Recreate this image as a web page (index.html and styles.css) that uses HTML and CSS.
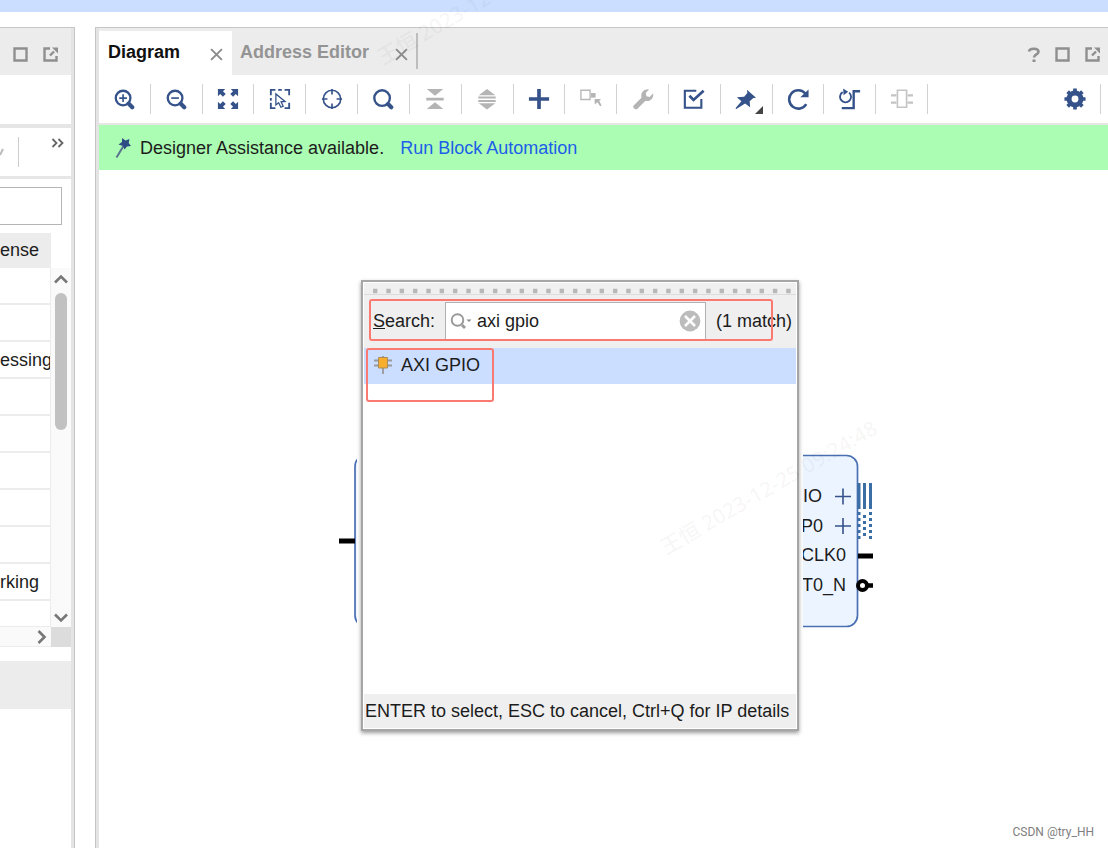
FILE: index.html
```html
<!DOCTYPE html>
<html lang="en">
<head>
<meta charset="utf-8">
<title>Block Design</title>
<link rel="stylesheet" href="styles.css">
</head>
<body>
<svg class="defs" aria-hidden="true">
  <symbol id="maximize" viewBox="0 0 16 16"><path d="M1.5 1.5h12v12h-12z" fill="none" stroke="#8f8f8f" stroke-width="2.4"/></symbol>
  <symbol id="popout" viewBox="0 0 16 16"><path d="M7 1.5H1.5v12h12V9" fill="none" stroke="#8f8f8f" stroke-width="2.4"/><path d="M7 8.500l4-4" stroke="#8f8f8f" stroke-width="2.400"/><path d="M9 .5H15v6z" fill="#8f8f8f"/></symbol>
  <symbol id="close" viewBox="0 0 12 12"><path d="M1 1l10 10M11 1L1 11" stroke="#8c8c8c" stroke-width="1.8"/></symbol>
</svg>
<div class="band"></div>
<div class="workspace">
  <aside class="side">
    <div class="side-head">
      <button class="plain" aria-label="Maximize"><svg class="i16"><use href="#maximize"/></svg></button>
      <button class="plain" aria-label="Float"><svg class="i16"><use href="#popout"/></svg></button>
    </div>
    <div class="side-tabs"></div>
    <div class="side-tools">
      <svg class="chev" viewBox="0 0 4 8" aria-hidden="true"><path d="M0 7L3 1" stroke="#bbb" stroke-width="2"/></svg>
      <span class="rule"></span>
      <button class="plain more" aria-label="More"><svg width="14" height="10" viewBox="0 0 14 10"><path d="M1.500 1l4 4-4 4M7.500 1l4 4-4 4" fill="none" stroke="#666" stroke-width="1.800"/></svg></button>
    </div>
    <div class="side-filter"><input type="text" aria-label="Filter"></div>
    <div class="grid">
      <table>
        <thead><tr><th>ense</th></tr></thead>
        <tbody>
          <tr><td></td></tr><tr><td></td></tr><tr><td>essing</td></tr><tr><td></td></tr><tr><td></td></tr>
          <tr><td></td></tr><tr><td></td></tr><tr><td></td></tr><tr><td>rking</td></tr><tr class="partial"><td></td></tr>
        </tbody>
      </table>
      <div class="vbar">
        <svg width="16" height="10" viewBox="0 0 16 10"><path d="M2 8.500l6-6 6 6" fill="none" stroke="#777" stroke-width="2.600"/></svg>
        <span class="thumb"></span>
        <svg width="16" height="10" viewBox="0 0 16 10"><path d="M2 1.500l6 6 6-6" fill="none" stroke="#777" stroke-width="2.600"/></svg>
      </div>
      <div class="hbar"><svg width="10" height="16" viewBox="0 0 10 16"><path d="M1.500 2l6 6-6 6" fill="none" stroke="#777" stroke-width="2.600"/></svg></div>
      <div class="corner"></div>
    </div>
    <div class="side-foot"></div>
  </aside>

  <main class="main">
    <header class="tabs">
      <div class="tab active"><span>Diagram</span><button class="plain" aria-label="Close Diagram"><svg class="i12"><use href="#close"/></svg></button></div>
      <div class="tab"><span>Address Editor</span><button class="plain" aria-label="Close Address Editor"><svg class="i12"><use href="#close"/></svg></button></div>
      <div class="window-tools">
        <button class="plain help" aria-label="Help"><svg width="14" height="16" viewBox="0 0 14 16"><path d="M2 4.500C2.500 .8 11.500 .8 11.500 4.800c0 2.600-4.500 2.600-4.500 5.700" fill="none" stroke="#8f8f8f" stroke-width="2.600"/><path d="M5.500 12.500h3V15h-3z" fill="#8f8f8f"/></svg></button>
        <button class="plain" aria-label="Maximize"><svg class="i16"><use href="#maximize"/></svg></button>
        <button class="plain" aria-label="Float"><svg class="i16"><use href="#popout"/></svg></button>
      </div>
    </header>

    <div class="toolbar">
      <div class="tools">
        <button aria-label="Zoom In"><svg viewBox="0 0 24 24"><circle cx="11" cy="11" r="8" fill="none" stroke="#35528a" stroke-width="2.500"/><path d="M11 6.800v8.400M6.800 11h8.400" stroke="#35528a" stroke-width="1.800"/><path d="M17 17l4 4" stroke="#35528a" stroke-width="4.500" stroke-linecap="round"/></svg></button>
        <button aria-label="Zoom Out"><svg viewBox="0 0 24 24"><circle cx="11" cy="11" r="8" fill="none" stroke="#35528a" stroke-width="2.500"/><path d="M6.800 11h8.400" stroke="#35528a" stroke-width="1.800"/><path d="M17 17l4 4" stroke="#35528a" stroke-width="4.500" stroke-linecap="round"/></svg></button>
        <button aria-label="Zoom Fit"><svg viewBox="0 0 24 24"><path d="M1 1h8L6.500 3.500 9.500 6.500 6.500 9.500 3.500 6.500 1 9zM23 1h-8l2.500 2.500-3 3 3 3L20.500 6.500 23 9zM1 23h8l-2.500-2.500 3-3-3-3-3 3L1 15zM23 23h-8l2.500-2.500-3-3 3-3 3 3L23 15z" fill="#35528a"/></svg></button>
        <button aria-label="Zoom to Selection"><svg viewBox="0 0 24 24"><path d="M2 8V2h5M17 2h5v6M2 16v6h5M17 22h5v-6M10 2h4M2 11v3" fill="none" stroke="#35528a" stroke-width="2"/><path d="M7.500 6.500v12l3-2.500 2.500 5 2.500-1.200-2.300-4.800 4.300-.3z" fill="none" stroke="#35528a" stroke-width="1.400"/></svg></button>
        <button aria-label="Center"><svg viewBox="0 0 24 24"><circle cx="12" cy="12" r="9.500" fill="none" stroke="#35528a" stroke-width="1.800"/><path d="M12 1v6M12 17v6M1 12h6M17 12h6" stroke="#35528a" stroke-width="1.800"/></svg></button>
        <button aria-label="Find"><svg viewBox="0 0 24 24"><circle cx="11" cy="11" r="8.500" fill="none" stroke="#35528a" stroke-width="2.600"/><path d="M17.500 17.500l3.500 3.500" stroke="#35528a" stroke-width="4.500" stroke-linecap="round"/></svg></button>
        <button aria-label="Collapse All"><svg viewBox="0 0 24 24"><path d="M3 1h18l-9 7.500zM3 23h18l-9-7.500zM2.500 10.700h19v2.800h-19z" fill="#b4b4b4"/></svg></button>
        <button aria-label="Expand All"><svg viewBox="0 0 24 24"><path d="M3 8h18L12 1zM3 16.500h18l-9 7zM2.500 9.300h19v2.200h-19zM2.500 13h19v2.200h-19z" fill="#b4b4b4"/></svg></button>
        <button aria-label="Add IP"><svg viewBox="0 0 24 24"><path d="M12 1v22M1 12h22" stroke="#35528a" stroke-width="4"/></svg></button>
        <button aria-label="Make External"><svg viewBox="0 0 24 24"><path d="M1 2.500h10v10H1z" fill="none" stroke="#b8b8b8" stroke-width="1.500"/><path d="M12 5.500h5v5h-5z" fill="#b4b4b4"/><path d="M16 12h7l-2 2 2.500 5-1.500 1-3-4.500-3 2.500z" fill="#b4b4b4"/></svg></button>
        <button aria-label="Customize"><svg viewBox="0 0 24 24"><path d="M1.800 19l8.500-8.300C9.300 5 13 1 18.500 1.500L15 5.500l.8 3.500 3.500.8 3.900-4c.5 6.200-4 9.200-8.500 8.200L6 22.500C3.500 24.500 .3 21.500 1.800 19z" fill="#b4b4b4"/></svg></button>
        <button aria-label="Validate"><svg viewBox="0 0 24 24"><path d="M14.500 3H2v18.500h18V12" fill="none" stroke="#35528a" stroke-width="2.300"/><path d="M7 8.500l4.500 4.500L22.500 3" fill="none" stroke="#35528a" stroke-width="3"/></svg></button>
        <button class="drop" aria-label="Pin"><svg viewBox="0 0 24 24"><path d="M13 2l10 8.500-3 .5-4 3.500.5 6.500-5.500-4L1.500 23 .5 22l6.500-7.500-5-4.500 8-.5L13.500 5.500z" fill="#35528a"/></svg><svg class="mark" viewBox="0 0 8 8"><path d="M8 0v8H0z" fill="#444"/></svg></button>
        <button aria-label="Regenerate"><svg viewBox="0 0 24 24"><path d="M21 17.500A10 10 0 1 1 20 6" fill="none" stroke="#35528a" stroke-width="2.800"/><path d="M23.500 1.500V10H14.500z" fill="#35528a"/></svg></button>
        <button aria-label="Optimize Routing"><svg viewBox="0 0 24 24"><path d="M11 5A6 6 0 1 1 4 4.500" fill="none" stroke="#35528a" stroke-width="2"/><path d="M4.500 .5l5.500 3.500-5 4z" fill="#35528a"/><path d="M3 22h13V3.500h7" fill="none" stroke="#35528a" stroke-width="2.600"/></svg></button>
        <button aria-label="Interface"><svg viewBox="0 0 24 24"><path d="M7 2.500h10v18.500H7z" fill="none" stroke="#c4c4c4" stroke-width="1.800"/><path d="M0 8h6M0 16h6M18 8h6M18 16h6" stroke="#c4c4c4" stroke-width="2.400"/></svg></button>
      </div>
      <div class="tools settings">
        <button aria-label="Settings"><svg viewBox="0 0 24 24"><circle cx="12" cy="12" r="6.500" fill="none" stroke="#35528a" stroke-width="5.500"/><path d="M12 .5V5M12 19v4.500M.5 12H5M19 12h4.500M4 4l3 3M17 17l3 3M4 20l3-3M17 7l3-3" stroke="#35528a" stroke-width="4"/></svg></button>
      </div>
    </div>

    <div class="assist">
      <svg width="18" height="22" viewBox="0 0 18 22" aria-hidden="true"><path d="M9.500 9L2.500 20.500" stroke="#5a7390" stroke-width="2"/><path d="M8 1l3.500 2.500L15.500 2l-.8 4 2.300 3-4 .5-2.500 3L9 9 4.500 7.500 8 5z" fill="#2f4d85"/></svg>
      <span>Designer Assistance available.</span>
      <a href="#">Run Block Automation</a>
    </div>

    <section class="canvas">
      <svg class="block" viewBox="99 170 800 500" width="800" height="500" role="img" aria-label="Processing system block">
        <rect x="355" y="455.500" width="502.500" height="171" rx="11" fill="#ecf5ff" stroke="#4a6fb3" stroke-width="1.700"/>
        <path d="M339 541h16M858 556h15" stroke="#000" stroke-width="5"/>
        <g class="pins"><text x="822" y="502">IO</text><text x="823" y="532">P0</text><text x="846" y="561">CLK0</text><text x="846" y="591">T0_N</text></g>
        <path d="M835 496.500h16M843 488.500v16M835 526h16M843 518v16" stroke="#35528a" stroke-width="1.600"/>
        <path d="M859 483v26M864.500 483v26M870.500 483v26" stroke="#3a6ea5" stroke-width="3"/>
        <path d="M859 512v27M870.500 512v27" stroke="#3a6ea5" stroke-width="3" stroke-dasharray="3 3"/>
        <path d="M864.500 515v22" stroke="#3a6ea5" stroke-width="3" stroke-dasharray="3 3"/>
        <circle cx="862.500" cy="585.500" r="4.500" fill="#fff" stroke="#000" stroke-width="4"/><path d="M868 585.500h5" stroke="#000" stroke-width="4.500"/>
      </svg>

      <div class="dialog" role="dialog" aria-label="Add IP">
        <svg class="grip" aria-hidden="true"><line x1="9" y1="8" x2="428" y2="8" stroke="#b8b8b8" stroke-width="4.400" stroke-dasharray="4.400 8.930"/></svg>
        <div class="search">
          <label for="q"><u>S</u>earch:</label>
          <div class="field">
            <svg width="22" height="18" viewBox="0 0 22 18" aria-hidden="true"><circle cx="7.500" cy="8" r="5.800" fill="none" stroke="#999" stroke-width="1.900"/><path d="M12 13l3 3" stroke="#999" stroke-width="2.800"/><path d="M16.500 7.500h5l-2.500 2.500z" fill="#888"/></svg>
            <input id="q" type="text" value="axi gpio">
            <button class="plain" aria-label="Clear"><svg width="22" height="22" viewBox="0 0 22 22"><circle cx="11" cy="11" r="10.400" fill="#bcbcbc"/><path d="M6 6l10 10M16 6L6 16" stroke="#fff" stroke-width="2.500"/></svg></button>
          </div>
          <span>(1 match)</span>
        </div>
        <div class="results">
          <button class="result"><svg width="20" height="20" viewBox="0 0 20 20"><path d="M1 5.500h18M1 10.500h18M10 1v18" stroke="#999" stroke-width="1.800"/><path d="M5.500 2.500h9v10.500h-9z" fill="#f9ad2d" stroke="#a98c5a" stroke-width="1"/></svg>AXI GPIO</button>
        </div>
        <div class="hint">ENTER to select, ESC to cancel, Ctrl+Q for IP details</div>
        <span class="callout callout-search"></span>
        <span class="callout callout-result"></span>
      </div>
      <span class="credit">CSDN @try_HH</span>
    </section>
  </main>
</div>
<span class="watermark mark-top">王恒 2023-12-</span>
<span class="watermark mark-mid">王恒 2023-12-25 09:24:48</span>
</body>
</html>
```
FILE: styles.css
```css
* { box-sizing: border-box; }
body {
  margin: 0;
  min-height: 100vh;
  display: flex;
  flex-direction: column;
  position: relative;
  overflow: hidden;
  background: #fff;
  color: #1c1c1c;
  font: 18px/24px "Liberation Sans", Arial, sans-serif;
}
svg { display: block; flex: none; }
button, input { font: inherit; color: inherit; }
.defs { position: absolute; width: 0; height: 0; }
.plain { display: flex; padding: 0; border: 0; background: none; }
.i16 { width: 16px; height: 16px; }
.i12 { width: 13px; height: 13px; }

.band { height: 12px; background: #ccdeff; }
.workspace { flex: 1; display: flex; gap: 20px; padding-top: 15px; }

/* Left panel */
.side {
  flex: 0 0 75px;
  display: flex;
  flex-direction: column;
  overflow: hidden;
  border-top: 1px solid #c6c6c6;
  border-right: 1px solid #c4c4c4;
  box-shadow: inset -3px 0 #e4e4e4;
  padding-right: 3px;
}
.side-head { height: 47px; padding: 6px 12px 0 0; display: flex; align-items: center; justify-content: flex-end; gap: 14px; background: #ececec; }
.side-tabs { height: 53px; border-bottom: 4px solid #e6e6e6; }
.side-tools { height: 51px; display: flex; align-items: center; border-bottom: 3px solid #e6e6e6; }
.chev { width: 4px; height: 8px; }
.rule { width: 1px; height: 30px; margin-left: 14px; background: #ccc; }
.more { margin: 0 0 18px 32px; }
.side-filter { padding: 8px 9px 8px 0; }
.side-filter input { display: block; width: 100%; height: 38px; border: 1px solid #b5b5b5; border-left: 0; }
.grid { display: grid; grid-template-columns: 51px 20px; }
table { width: 51px; table-layout: fixed; border-collapse: separate; border-spacing: 0; }
th, td { padding: 0; overflow: hidden; white-space: nowrap; text-align: left; font-weight: normal; }
th { height: 35px; padding-bottom: 2px; background: #ececec; }
td { height: 37px; border-bottom: 2px solid #ececec; border-right: 1px solid #ececec; }
.partial td { height: 26px; border-bottom: 1px solid #ececec; }
.vbar { margin-top: 35px; padding: 6px 0 4px; display: flex; flex-direction: column; align-items: center; background: #fafafa; }
.thumb { width: 12px; height: 137px; margin: 9px 0 auto; border-radius: 6px; background: #c1c1c1; }
.hbar { height: 20px; padding-right: 4px; display: flex; align-items: center; justify-content: flex-end; background: #fafafa; border-bottom: 1px solid #ececec; }
.corner { background: #dcdcdc; }
.side-foot { height: 48px; margin-top: 14px; background: #ececec; }

/* Diagram panel */
.main {
  flex: 1;
  min-width: 0;
  display: flex;
  flex-direction: column;
  border-top: 1px solid #c6c6c6;
  border-left: 1px solid #c4c4c4;
  box-shadow: inset 3px 0 #e4e4e4;
  padding-left: 3px;
}
.tabs { height: 47px; padding-top: 3px; display: flex; background: #ececec; }
.tab { display: flex; align-items: center; padding: 0 9px 2px; font-weight: bold; color: #949494; }
.tab .plain { padding-top: 4px; }
.tab.active { gap: 30px; background: #fff; color: #111; }
.tab:not(.active) { height: 39px; padding: 3px 7px 0 8px; gap: 26px; }
.tab:not(.active)::after { content: ""; width: 2px; height: 36px; margin: 0 -9px 0 -19px; background: #bdbdbd; }
.tab:not(.active)::after { margin: -3px -9px 0 -18px; }
.window-tools { margin-left: auto; padding: 4px 7px 0 0; display: flex; align-items: center; gap: 14px; }
.toolbar { height: 50px; display: flex; justify-content: space-between; align-items: center; padding: 0 7px 1px 0; border-bottom: 2px solid #e6e6e6; }
.tools { flex: 0 1 829px; display: grid; grid-template-columns: repeat(16, 1fr); }
.settings { flex: 0 0 52px; grid-template-columns: 1fr; }
.tools button { position: relative; height: 30px; padding: 0; display: flex; align-items: center; justify-content: center; border: 0; border-right: 1px solid #d2d2d2; background: none; }
.tools svg { width: 22px; height: 22px; }
.tools .mark { position: absolute; right: 9px; bottom: 0; width: 8px; height: 8px; }
.assist { height: 45px; display: flex; align-items: center; padding-left: 15px; background: #abfdb3; }
.assist span { margin: 0 16px 0 8px; }
a { color: #1c5fe8; text-decoration: none; }

/* Canvas */
.canvas { position: relative; flex: 1; min-height: 600px; overflow: hidden; }
.block { position: absolute; left: 0; top: 0; }
.pins { font-size: 18px; text-anchor: end; fill: #1c1c1c; }
.dialog {
  position: absolute;
  left: 262px;
  top: 110px;
  width: 438px;
  height: 451px;
  display: flex;
  flex-direction: column;
  padding: 1px;
  border: 2px solid #a6a6a6;
  background: #fff;
  box-shadow: 0 2px 4px rgba(0, 0, 0, .4), 0 0 0 4px #fff;
}
.grip { width: 100%; height: 12px; background: #f0f0f0; border-bottom: 1px solid #dcdcdc; }
.search { height: 53px; display: flex; align-items: center; padding: 0 0 2px 9px; gap: 10px; background: #efefef; white-space: nowrap; }
.field { flex: none; width: 261px; height: 38px; display: flex; align-items: center; padding: 0 4px; border: 1px solid #b0b0b0; background: #fff; }
.field input { flex: 1; width: 0; min-width: 0; padding: 0 0 0 5px; border: 0; outline: 0; background: none; }
.results { flex: 1; }
.result { width: 100%; height: 36px; display: flex; align-items: center; gap: 8px; padding: 0 9px 2px; border: 0; background: #ccdeff; text-align: left; }
.hint { height: 34px; padding: 5px 1px; background: #efefef; white-space: nowrap; }
.callout { position: absolute; border: 2px solid #fa7a72; border-radius: 3px; }
.callout-search { left: 6px; top: 17px; width: 404px; height: 42px; }
.callout-result { left: 3px; top: 66px; width: 128px; height: 54px; }
.credit { position: absolute; right: 14px; bottom: 8px; font: 12px/16px Roboto, sans-serif; color: #808080; }

.watermark {
  position: absolute;
  transform: rotate(-30deg);
  transform-origin: left bottom;
  font: 500 21px/24px "Noto Sans", "Noto Sans CJK SC", sans-serif;
  color: rgba(0, 0, 0, .05);
  white-space: nowrap;
  pointer-events: none;
}
.mark-top { left: 385px; top: 45px; }
.mark-mid { left: 668px; top: 535px; }
```
